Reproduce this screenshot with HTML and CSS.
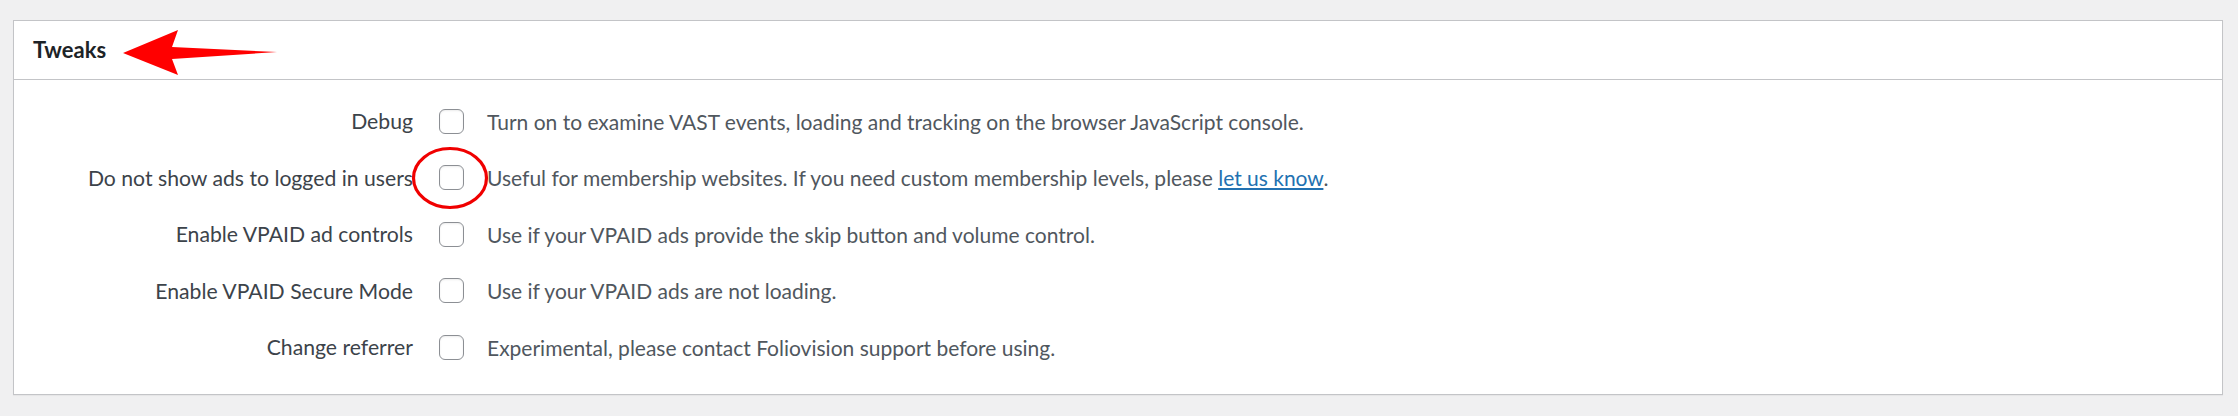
FILE: index.html
```html
<!DOCTYPE html>
<html lang="en">
<head>
<meta charset="utf-8">
<title>Tweaks</title>
<link rel="stylesheet" href="styles.css">
</head>
<body>
<div class="page">
  <section class="postbox">
    <h2 class="postbox-title">Tweaks</h2>
    <div class="postbox-body">
      <div class="row">
        <label class="row-label" for="c1">Debug</label>
        <input class="check" type="checkbox" id="c1">
        <span class="row-desc">Turn on to examine VAST events, loading and tracking on the browser JavaScript console.</span>
      </div>
      <div class="row">
        <label class="row-label" for="c2">Do not show ads to logged in users</label>
        <input class="check" type="checkbox" id="c2">
        <span class="row-desc">Useful for membership websites. If you need custom membership levels, please <a class="link" href="#">let us know</a>.</span>
      </div>
      <div class="row">
        <label class="row-label" for="c3">Enable VPAID ad controls</label>
        <input class="check" type="checkbox" id="c3">
        <span class="row-desc">Use if your VPAID ads provide the skip button and volume control.</span>
      </div>
      <div class="row">
        <label class="row-label" for="c4">Enable VPAID Secure Mode</label>
        <input class="check" type="checkbox" id="c4">
        <span class="row-desc">Use if your VPAID ads are not loading.</span>
      </div>
      <div class="row">
        <label class="row-label" for="c5">Change referrer</label>
        <input class="check" type="checkbox" id="c5">
        <span class="row-desc">Experimental, please contact Foliovision support before using.</span>
      </div>
    </div>
  </section>
  <svg class="annotations" width="2238" height="416" viewBox="0 0 2238 416" aria-hidden="true">
    <polygon points="123,53 178,30 172,47 277,52 172,59 178,75" fill="#ff0000"/>
    <ellipse cx="450" cy="178" rx="36.5" ry="29.5" fill="none" stroke="#f00000" stroke-width="3.2"/>
  </svg>
</div>
</body>
</html>
```

FILE: styles.css
```css
html, body {
  margin: 0;
  padding: 0;
  background: #f0f0f1;
}

.page {
  position: relative;
  width: 2238px;
  height: 416px;
  padding: 20px 15px 0 13px;
  box-sizing: border-box;
  font-family: Lato, "Open Sans", "Liberation Sans", sans-serif;
}

.postbox {
  width: 2210px;
  height: 375px;
  box-sizing: border-box;
  background: #ffffff;
  border: 1px solid #c3c4c7;
  box-shadow: 0 1px 1px rgba(0, 0, 0, 0.04);
  display: flex;
  flex-direction: column;
}

.postbox-title {
  margin: 0;
  height: 59px;
  box-sizing: border-box;
  border-bottom: 1px solid #c3c4c7;
  display: flex;
  align-items: center;
  padding: 0 0 2px 19px;
  font-size: 22px;
  font-weight: 700;
  color: #1d2327;
}

.postbox-body {
  padding-top: 13px;
  display: flex;
  flex-direction: column;
}

.row {
  height: 56.5px;
  display: flex;
  align-items: center;
}

.row-label {
  width: 399px;
  flex: none;
  text-align: right;
  margin-right: 26px;
  font-size: 21.2px;
  color: #3c434a;
}

.check {
  -webkit-appearance: none;
  appearance: none;
  margin: 0 23px 0 0;
  flex: none;
  width: 25px;
  height: 25px;
  box-sizing: border-box;
  border: 1.5px solid #8c8f94;
  border-radius: 6px;
  background: #ffffff;
  box-shadow: inset 0 1px 2px rgba(0, 0, 0, 0.08);
}

.row-desc {
  font-size: 21px;
  color: #50575e;
  white-space: nowrap;
}

.link {
  color: #2271b1;
  text-decoration: underline;
}

.annotations {
  position: absolute;
  left: 0;
  top: 0;
  pointer-events: none;
}
```
